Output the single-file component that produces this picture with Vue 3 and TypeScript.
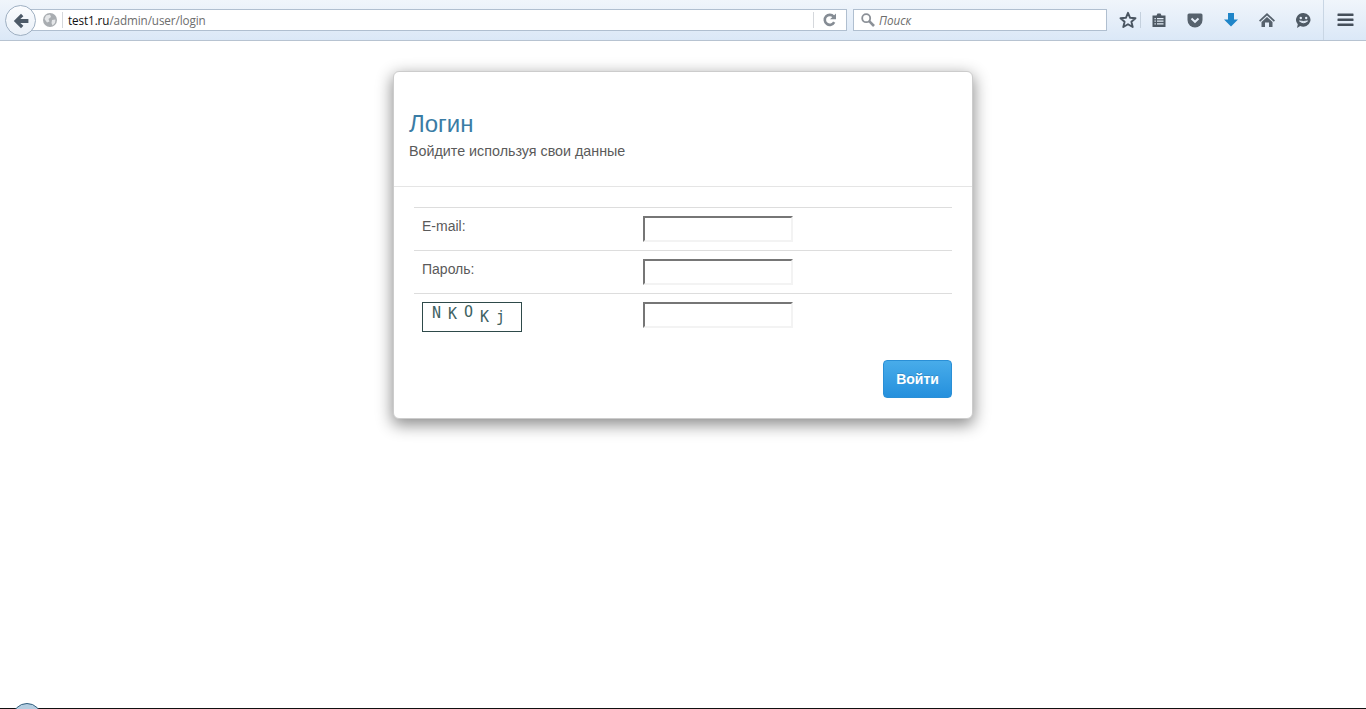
<script setup lang="ts">
const rows = [
  { id: 'email', label: 'E-mail:' },
  { id: 'password', label: 'Пароль:' },
]
const captcha = [
  { ch: 'N', cls: 'c1' },
  { ch: 'K', cls: 'c2' },
  { ch: 'O', cls: 'c3' },
  { ch: 'K', cls: 'c4' },
  { ch: 'j', cls: 'c5' },
]
</script>

<template>
  <div class="page">
    <header class="toolbar">
      <div class="back">
        <svg width="18" height="18" viewBox="0 0 18 18">
          <path d="M9 1.8 L1.8 9 L9 16.2 L11.4 13.8 L8.3 10.9 H16.4 V7.1 H8.3 L11.4 4.2 Z" fill="#4d5a68" />
        </svg>
      </div>
      <div class="urlbar">
        <svg class="globe" width="16" height="16" viewBox="0 0 16 16">
          <circle cx="8" cy="8" r="7" fill="#a9adb1" />
          <path d="M4 3.5 L8 2.5 L9 5 L6.5 7 L7.5 9.5 L5 10.5 L2.5 7 Z M10 8 L13.5 7.5 L13 11 L10.5 13.5 L9.5 11 Z" fill="#e4e6e8" />
        </svg>
        <span class="sep"></span>
        <span class="url"><b>test1.ru</b>/admin/user/login</span>
        <span class="sep end"></span>
        <svg class="reload" width="14" height="14" viewBox="0 0 14 14">
          <path d="M11.2 9.2 A5 5 0 1 1 10.6 3.6" fill="none" stroke="#858c94" stroke-width="2.6" />
          <path d="M7 6.2 H13 V0.6 Z" fill="#858c94" />
        </svg>
      </div>
      <div class="search">
        <svg width="16" height="16" viewBox="0 0 16 16">
          <circle cx="6.2" cy="6.2" r="4" fill="none" stroke="#8b9097" stroke-width="1.8" />
          <path d="M9.2 9.2 L14 14" stroke="#8b9097" stroke-width="2.6" />
        </svg>
        <span class="hint">Поиск</span>
      </div>
      <div class="tools">
        <svg class="t-star" width="18" height="18" viewBox="0 0 18 18">
          <path d="M9 1.8 L11.1 6.8 L16.5 7.2 L12.4 10.7 L13.7 16 L9 13.2 L4.3 16 L5.6 10.7 L1.5 7.2 L6.9 6.8 Z" fill="none" stroke="#4a5561" stroke-width="1.9" stroke-linejoin="round" />
        </svg>
        <span class="tool-sep"></span>
        <svg class="t-list" width="16" height="16" viewBox="0 0 16 16">
          <path d="M1.5 3.5 H5.5 L6.5 1.5 H9.5 L10.5 3.5 H14.5 V15 H1.5 Z" fill="#4d5863" />
          <path d="M3.5 6 H4.8 V7.2 H3.5 Z M6 6 H12.5 V7.2 H6 Z M3.5 8.6 H4.8 V9.8 H3.5 Z M6 8.6 H12.5 V9.8 H6 Z M3.5 11.2 H4.8 V12.4 H3.5 Z M6 11.2 H12.5 V12.4 H6 Z" fill="#e4edf8" />
        </svg>
        <svg class="t-pocket" width="16" height="15" viewBox="0 0 16 15">
          <path d="M0.5 2 Q0.5 0.5 2 0.5 H14 Q15.5 0.5 15.5 2 V7 A7.5 7.5 0 0 1 0.5 7 Z" fill="#57626d" />
          <path d="M4.5 5.5 L8 8.8 L11.5 5.5" fill="none" stroke="#e6eef8" stroke-width="2" />
        </svg>
        <svg class="t-down" width="16" height="16" viewBox="0 0 16 16">
          <path d="M5 1 H11 V7.5 H15 L8 14.5 L1 7.5 H5 Z" fill="#1f85c8" />
        </svg>
        <svg class="t-home" width="18" height="16" viewBox="0 0 18 16">
          <path d="M9 1 L17 8.5 L15.8 9.7 L9 3.5 L2.2 9.7 L1 8.5 Z" fill="#56616c" />
          <path d="M9 5 L14.5 10 V15 H11 V10.5 H7 V15 H3.5 V10 Z" fill="#56616c" />
        </svg>
        <svg class="t-chat" width="17" height="17" viewBox="0 0 17 17">
          <path d="M8.5 1 A7.3 6.8 0 1 1 5.2 14 L2 16 L2.8 12.2 A7.3 6.8 0 0 1 8.5 1 Z" fill="#4f5a65" />
          <circle cx="5.8" cy="6" r="1.2" fill="#e4edf8" />
          <circle cx="11.2" cy="6" r="1.2" fill="#e4edf8" />
          <path d="M4.5 9 Q8.5 12.5 12.5 9 Q8.5 10 4.5 9 Z" fill="#e4edf8" stroke="#e4edf8" />
        </svg>
        <span class="menu-wrap">
          <svg width="17" height="14" viewBox="0 0 17 14">
            <path d="M1 0.5 H16 Q16.5 0.5 16.5 1 V2.5 Q16.5 3 16 3 H1 Q0.5 3 0.5 2.5 V1 Q0.5 0.5 1 0.5 Z M1 5.5 H16 Q16.5 5.5 16.5 6 V7.5 Q16.5 8 16 8 H1 Q0.5 8 0.5 7.5 V6 Q0.5 5.5 1 5.5 Z M1 10.5 H16 Q16.5 10.5 16.5 11 V12.5 Q16.5 13 16 13 H1 Q0.5 13 0.5 12.5 V11 Q0.5 10.5 1 10.5 Z" fill="#454f5a" />
          </svg>
        </span>
      </div>
    </header>

    <main class="main">
      <section class="card">
        <div class="card-head">
          <h1>Логин</h1>
          <p>Войдите используя свои данные</p>
        </div>
        <form class="card-body" @submit.prevent>
          <div v-for="r in rows" :key="r.id" class="row">
            <label :for="r.id" class="label">{{ r.label }}</label>
            <input :id="r.id" class="field" type="text" />
          </div>
          <div class="row">
            <div class="label">
              <div class="captcha">
                <span v-for="(c, i) in captcha" :key="i" :class="c.cls">{{ c.ch }}</span>
              </div>
            </div>
            <input class="field" type="text" aria-label="captcha" />
          </div>
          <div class="actions">
            <button class="submit" type="submit">Войти</button>
          </div>
        </form>
      </section>
    </main>

    <footer class="strip"><span class="orb"></span></footer>
  </div>
</template>

<style>
html, body { margin: 0; background: #fff; overflow: hidden; }
</style>

<style scoped>
.page {
  height: 709px;
  display: flex;
  flex-direction: column;
  font-family: "Liberation Sans", Arial, sans-serif;
  overflow: hidden;
}
.toolbar {
  height: 40px;
  flex: none;
  box-sizing: content-box;
  border-bottom: 1px solid #b7c3d1;
  background: linear-gradient(#f0f5fb, #dbe8f7);
  display: flex;
  align-items: flex-start;
  position: relative;
}
.back {
  position: absolute;
  left: 5px;
  top: 5px;
  width: 29px;
  height: 29px;
  border: 1px solid #9fb0c2;
  border-radius: 50%;
  background: linear-gradient(#fbfcfe, #e9f0f8);
  display: flex;
  align-items: center;
  justify-content: center;
  z-index: 1;
  box-sizing: content-box;
}
.urlbar {
  margin: 9px 0 0 30px;
  width: 817px;
  height: 22px;
  box-sizing: border-box;
  background: #fff;
  border: 1px solid #b0bfd0;
  display: flex;
  align-items: center;
}
.globe { margin-left: 11px; flex: none; }
.sep { width: 1px; height: 16px; background: #d5d8dc; margin-left: 4px; flex: none; }
.sep.end { margin-left: auto; }
.url { margin-left: 5px; font-size: 11.7px; color: #6d6d6d; font-family: "Open Sans", sans-serif; letter-spacing: -0.1px; }
.url b { font-weight: 400; color: #111; }
.reload { margin: 0 9px; flex: none; }
.search {
  margin: 9px 0 0 6px;
  width: 254px;
  height: 22px;
  box-sizing: border-box;
  background: #fff;
  border: 1px solid #b0bfd0;
  display: flex;
  align-items: center;
  padding-left: 6px;
}
.hint { margin-left: 3px; font-size: 11.7px; font-style: italic; color: #6d6d6d; font-family: "Open Sans", sans-serif; }
.tools { flex: 1; height: 40px; display: flex; align-items: center; position: relative; padding-left: 12px; }
.t-star { flex: none; }
.tool-sep { width: 1px; height: 16px; background: #c4d0dd; margin-left: 3px; }
.t-list { margin-left: 10px; flex: none; }
.t-pocket { margin-left: 20px; flex: none; }
.t-down { margin-left: 20px; flex: none; }
.t-home { margin-left: 19px; flex: none; }
.t-chat { margin-left: 19px; flex: none; }
.menu-wrap {
  margin-left: 11px;
  padding-left: 13px;
  border-left: 1px solid #c9d6e4;
  height: 40px;
  display: flex;
  align-items: center;
}

.main { flex: 1; display: flex; justify-content: center; align-items: flex-start; padding-top: 30px; min-height: 0; }
.card {
  width: 580px;
  height: 348px;
  box-sizing: border-box;
  background: #fff;
  border: 1px solid #ccc;
  border-radius: 6px;
  box-shadow: 0 5px 16px 1px rgba(0, 0, 0, 0.45);
}
.card-head { height: 115px; box-sizing: border-box; padding: 38px 15px 0 15px; border-bottom: 1px solid #e5e5e5; }
h1 { margin: 0; font-size: 24px; line-height: 28px; font-weight: 400; color: #3a7ca5; }
p { margin: 4px 0 0; font-size: 14.3px; line-height: 18px; color: #5a5a5a; }
.card-body { padding: 20px 20px 0 20px; }
.row {
  height: 43px;
  box-sizing: border-box;
  border-top: 1px solid #ddd;
  display: flex;
  align-items: flex-start;
  padding-top: 8px;
}
.label { width: 229px; padding-left: 8px; box-sizing: border-box; font-size: 14px; line-height: 20px; color: #5a5a5a; flex: none; }
.field {
  width: 150px;
  height: 26px;
  box-sizing: border-box;
  padding: 0;
  margin: 0;
  background: #fff;
  border: 2px solid;
  border-color: #767676 #f3f3f3 #f3f3f3 #767676;
  outline: none;
}
.captcha {
  width: 100px;
  height: 30px;
  box-sizing: border-box;
  border: 1px solid #2e4a4a;
  font-family: "DejaVu Sans Mono", monospace;
  font-size: 15px;
  line-height: 16px;
  color: #3e6262;
  display: flex;
  padding-left: 9px;
  gap: 7px;
}
.captcha span { width: 9px; text-align: center; }
.c1 { margin-top: 2px; }
.c2 { margin-top: 3px; }
.c3 { margin-top: 1px; }
.c4 { margin-top: 6px; }
.c5 { margin-top: 6px; }
.actions { display: flex; justify-content: flex-end; padding-top: 24px; }
.submit {
  width: 69px;
  height: 38px;
  box-sizing: border-box;
  border: 1px solid #2a8fd6;
  border-radius: 4px;
  background: linear-gradient(#48acea, #2590dd);
  color: #fff;
  font: 700 14px "Liberation Sans", Arial, sans-serif;
  padding: 0;
  text-shadow: 0 -1px 0 rgba(0, 0, 0, 0.15);
}
.strip { flex: none; height: 1px; background: #111; position: relative; }
.orb {
  position: absolute;
  left: 12px;
  top: -5px;
  width: 30px;
  height: 30px;
  border-radius: 50%;
  border: 1px solid #33607f;
  box-sizing: border-box;
  background: #b4cde0;
}
</style>
